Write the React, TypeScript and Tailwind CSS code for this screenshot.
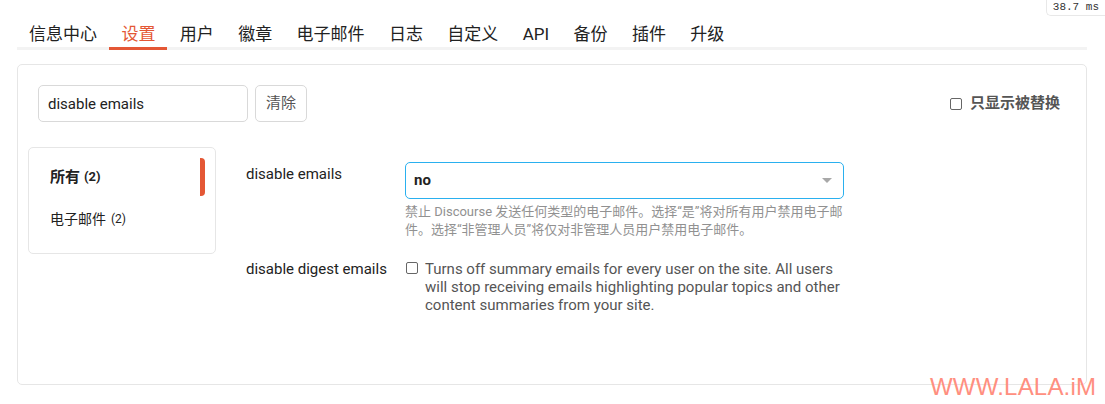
import React from "react";

const tabs = ["信息中心", "设置", "用户", "徽章", "电子邮件", "日志", "自定义", "API", "备份", "插件", "升级"];

export default function App() {
  const font = { fontFamily: 'Roboto, "Noto Sans CJK SC", sans-serif' };
  return (
    <div className="relative w-[1105px] h-[404px] bg-white overflow-hidden text-[#222]" style={font}>
      <div className="absolute right-0 top-0 h-[16px] px-[6px] border-l border-b border-[#e8e8e8] rounded-bl-[5px] bg-white text-[11px] leading-[15px] text-[#333] font-['Liberation_Mono',monospace]">
        38.7 ms
      </div>
      <div className="ml-[17px] w-[1070px]">
        <nav className="flex gap-[0.4px] pt-[22px] border-b-[3px] border-[#f3f3f3]">
          {tabs.map((t, i) => (
            <div
              key={t}
              className={
                "px-[12px] pb-[1px] text-[17px] leading-[24px] -mb-[3px] border-b-[3px] " +
                (i === 1 ? "text-[#e45735] border-[#e45735]" : "text-[#222] border-transparent")
              }
            >
              {t}
            </div>
          ))}
        </nav>
        <div className="mt-[14px] h-[321px] border border-[#e6e6e6] rounded-[5px]">
          <div className="flex items-center pt-[20px] pl-[20px] pr-[26px]">
            <div className="w-[210px] h-[37px] border border-[#d9d9d9] rounded-[5px] pl-[9px] pt-[1px] flex items-center text-[15px] text-[#222]">
              disable emails
            </div>
            <div className="ml-[7px] w-[52px] h-[37px] border border-[#d9d9d9] rounded-[5px] flex items-center justify-center text-[15px] text-[#555]">
              清除
            </div>
            <div className="ml-auto flex items-center gap-[8px]">
              <div className="w-[12px] h-[12px] border border-[#666] rounded-[2px]" />
              <span className="text-[15px] font-bold text-[#555]">只显示被替换</span>
            </div>
          </div>
          <div className="flex mt-[25px] pl-[10px]">
            <div className="w-[188px] h-[107px] border border-[#e6e6e6] rounded-[5px] pt-[10px] relative">
              <div className="h-[38px] pl-[21px] flex items-center text-[15px] font-bold text-[#222]">
                所有 <span className="ml-[4px] text-[13px]">(2)</span>
              </div>
              <div className="absolute right-[10px] top-[10px] w-[5px] h-[38px] bg-[#e45735] rounded-r-[4px]" />
              <div className="h-[38px] mt-[4px] pl-[21px] flex items-center text-[14px] text-[#222]">
                电子邮件 <span className="ml-[5px] text-[12px]">(2)</span>
              </div>
            </div>
            <div className="ml-[30px] pt-[15px]">
              <div className="flex">
                <div className="w-[159px] pt-[2px] text-[15px] leading-[20px] text-[#222]">disable emails</div>
                <div className="w-[439px]">
                  <div className="h-[37px] border border-[#2ab0ef] rounded-[5px] flex items-center pl-[8px] pr-[11px] text-[15px] font-bold text-[#222]">
                    no
                    <svg className="ml-auto" width="10" height="6" viewBox="0 0 10 6">
                      <path d="M0 0 L10 0 L5 5 Z" fill="#a8a8a8" />
                    </svg>
                  </div>
                  <div className="mt-[4px] text-[13px] leading-[18px] text-[#919191] w-[446px]">
                    禁止 Discourse 发送任何类型的电子邮件。选择“是”将对所有用户禁用电子邮件。选择“非管理人员”将仅对非管理人员用户禁用电子邮件。
                  </div>
                </div>
              </div>
              <div className="flex mt-[21px]">
                <div className="w-[160px] text-[15px] leading-[18px] text-[#222]">disable digest emails</div>
                <div className="flex w-[438px]">
                  <div className="mt-[2px] w-[12px] h-[12px] border border-[#666] rounded-[2px] shrink-0" />
                  <div className="ml-[7px] text-[15px] leading-[18px] text-[#555]">
                    Turns off summary emails for every user on the site. All users will stop receiving emails highlighting popular topics and other content summaries from your site.
                  </div>
                </div>
              </div>
            </div>
          </div>
        </div>
      </div>
      <div className="absolute left-[930px] top-[373px] text-[24px] leading-[28px] tracking-[0.2px] text-[#ff8f80]" style={{ fontFamily: '"Liberation Sans", Arial, sans-serif' }}>
        WWW.LALA.iM
      </div>
    </div>
  );
}
